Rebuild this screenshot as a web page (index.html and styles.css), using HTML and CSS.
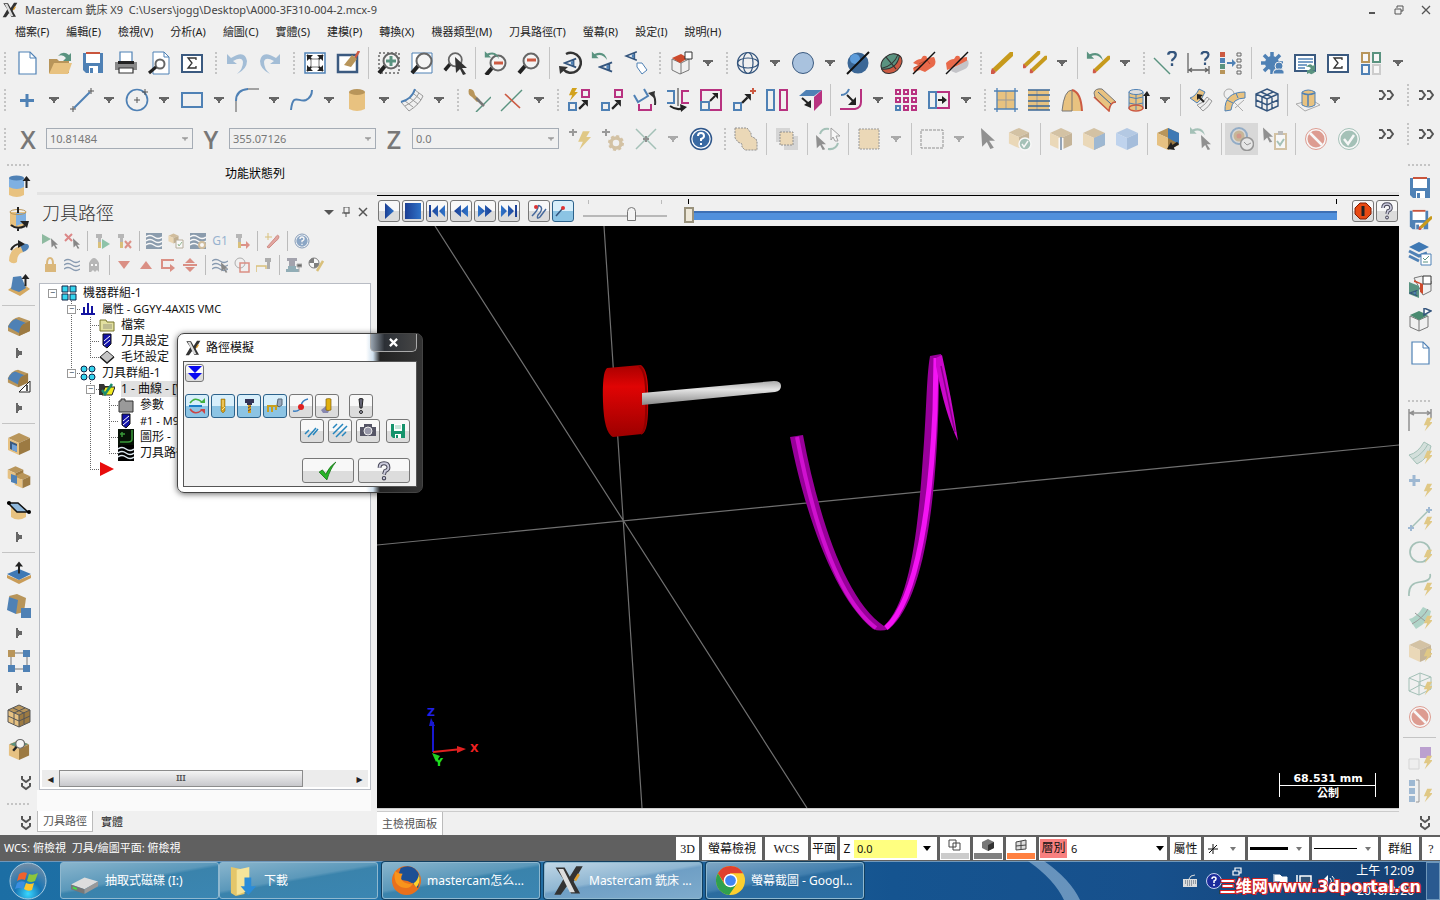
FILE: index.html
```html
<!DOCTYPE html>
<html lang="zh-Hant">
<head>
<meta charset="utf-8">
<title>Mastercam 銑床 X9</title>
<link rel="stylesheet" href="styles.css">
</head>
<body>
<svg class="defs" width="0" height="0" aria-hidden="true">
<defs>
<linearGradient id="gr" x1="0" x2="0" y1="0" y2="1"><stop offset="0" stop-color="#a80000"/><stop offset=".3" stop-color="#e00404"/><stop offset="1" stop-color="#9c0000"/></linearGradient>
<linearGradient id="gg" x1="0" x2="0" y1="0" y2="1"><stop offset="0" stop-color="#aaa"/><stop offset=".35" stop-color="#e4e4e4"/><stop offset="1" stop-color="#888"/></linearGradient>
<radialGradient id="orb" cx=".5" cy=".85" r=".8"><stop offset="0" stop-color="#39d8ff"/><stop offset=".45" stop-color="#1674b4"/><stop offset="1" stop-color="#6d8ba6"/></radialGradient>
<linearGradient id="gplay" x1="0" x2="1"><stop offset="0" stop-color="#1c3f94"/><stop offset="1" stop-color="#2f73c8"/></linearGradient>
<symbol id="dd" viewBox="0 0 10 6"><path d="M0 0h10v2H8v1H7v1H6v2H4V4H3V3H2V2H0z" fill="#666"/></symbol>
<symbol id="dr" viewBox="0 0 6 10"><path d="M0 0v10h2V8h1V7h3V3H3V2H2V0z" fill="#666"/></symbol>
<symbol id="chev" viewBox="0 0 16 10"><path d="M1 1h3l3 4-3 4H1M9 1h3l3 4-3 4H9" fill="none" stroke="#555" stroke-width="2"/></symbol>
<symbol id="chevd" viewBox="0 0 10 16"><path d="M1 1v3l4 3 4-3V1M1 8v3l4 3 4-3V8" fill="none" stroke="#555" stroke-width="2"/></symbol>
<symbol id="bolt" viewBox="0 0 12 16"><path d="M5 0h6L8 5h4L2 16l3-7H1z" fill="#d2a21c"/></symbol>
<symbol id="cur" viewBox="0 0 12 18"><path d="M0 0l12 11H7l4 6-3 1-3-6-4 4z" fill="#333"/></symbol>
<symbol id="cube" viewBox="0 0 24 24"><path d="M12 1l11 5-11 5L1 6z" fill="#b8955a"/><path d="M1 6l11 5v12L1 18z" fill="#e6c182"/><path d="M23 6l-11 5v12l11-5z" fill="#9c7a42"/></symbol>
<symbol id="lens" viewBox="0 0 24 24"><path d="M2 22l6-7" stroke="#222" stroke-width="4"/><circle cx="14" cy="10" r="7.500" fill="#f4f4f4" stroke="#666" stroke-width="2"/></symbol>
<symbol id="swirl" viewBox="0 0 20 12"><path d="M1 0v8h8L6 5q7-3 13 5Q16-2 4 3z" fill="#5a9380"/></symbol>
<symbol id="eye" viewBox="0 0 16 12"><path d="M15 1L2 6l13 5M12 2v8" fill="none" stroke="#34557d" stroke-width="2"/><path d="M9 4v4h3V4z" fill="#4f81b5"/></symbol>
<symbol id="pen" viewBox="0 0 24 24"><path d="M20 1h3v4L6 21l-4-3z" fill="#c79a1c"/><path d="M2 17l4 4-2 2H1v-3z" fill="#d05a48"/></symbol>
<symbol id="new" viewBox="0 0 24 24"><path d="M4 1h11l6 6v16H4z" fill="#fff" stroke="#4f81b5" stroke-width="1.200"/><path d="M15 1v6h6" fill="none" stroke="#4f81b5"/></symbol>
<symbol id="open" viewBox="0 0 24 24"><path d="M1 8h8l2 2h10v12H1z" fill="#b8955a"/><path d="M6 12h18l-4 11H1z" fill="#e8c280"/><path d="M10 5q5-6 11-1l2-2v8h-8l3-3q-3-4-8-2z" fill="#5a9380"/></symbol>
<symbol id="save" viewBox="0 0 24 24"><path d="M2 2h20v20H5l-3-3z" fill="#4f81b5"/><path d="M5 2h14v10H5zM8 15h9v7H8z" fill="#fff"/><path d="M5 1h14v2H5z" fill="#c9553c"/><path d="M9 17h3v5H9z" fill="#4f81b5"/></symbol>
<symbol id="print" viewBox="0 0 24 24"><path d="M6 1h12v10H6z" fill="#fff" stroke="#4f81b5" stroke-width="1.200"/><path d="M1 11h22v8H1z" fill="#888"/><path d="M4 10h16v3H4z" fill="#222"/><path d="M5 17h14v5H5z" fill="#fff" stroke="#333" stroke-width="1.200"/></symbol>
<symbol id="prev" viewBox="0 0 24 24"><path d="M6 1h11l5 5v17H6z" fill="#fff" stroke="#4f81b5"/><path d="M17 1v5h5" fill="none" stroke="#4f81b5"/><circle cx="13" cy="13" r="4.500" fill="none" stroke="#666" stroke-width="2"/><path d="M2 22l7-6" stroke="#222" stroke-width="3"/></symbol>
<symbol id="sigma" viewBox="0 0 24 24"><path d="M2 4h20v17H2z" fill="#fff" stroke="#3b5a80" stroke-width="2"/><path d="M16 9V7H8l4 5-4 5h8v-2" fill="none" stroke="#333" stroke-width="1.300"/></symbol>
<symbol id="undo" viewBox="0 0 24 24"><path d="M2 3v10h10L8 10q9-5 10 1 0 7-6 12 10-5 10-13Q20-2 6 7z" fill="#a3bdd6"/></symbol>
<symbol id="fit" viewBox="0 0 24 24"><path d="M2 2h20v20H2z" fill="#fff" stroke="#4f81b5" stroke-width="1.500"/><path d="M4 4l16 16M20 4L4 20" stroke="#222" stroke-width="2"/><path d="M4 4h6l-6 6zM20 4v6l-6-6zM4 20v-6l6 6zM20 20h-6l6-6z" fill="#222"/><path d="M8 8h8v8H8z" fill="#fff" stroke="#777"/></symbol>
<symbol id="clean" viewBox="0 0 24 24"><path d="M2 4h19v17H2z" fill="#fff" stroke="#3b5a80" stroke-width="2.500"/><path d="M23 0l-4 7" stroke="#cc5a42" stroke-width="2.500"/><path d="M16 4l5 4-6 8-7-2z" fill="#b8955a"/></symbol>
<symbol id="zwin" viewBox="0 0 24 24"><path d="M2 2h20v20H2z" fill="none" stroke="#222" stroke-dasharray="2 2"/><use href="#lens"/><path d="M14 5v10M9 10h10" stroke="#5a9380" stroke-width="3"/></symbol>
<symbol id="ztgt" viewBox="0 0 24 24"><path d="M2 2h20v20H2z" fill="#fff" stroke="#4f81b5"/><use href="#lens"/></symbol>
<symbol id="zcur" viewBox="0 0 24 24"><use href="#lens" width="21" height="21"/><use href="#cur" x="12" y="6" width="12" height="18"/></symbol>
<symbol id="zback" viewBox="0 0 24 24"><use href="#lens" y="2"/><path d="M10 12h9" stroke="#cc5a42" stroke-width="3"/><use href="#swirl" width="16" height="10"/></symbol>
<symbol id="zout" viewBox="0 0 24 24"><use href="#lens"/><path d="M10 9h9" stroke="#cc5a42" stroke-width="3"/></symbol>
<symbol id="rot" viewBox="0 0 24 24"><path d="M8 3a10 10 0 1 1-3 15" fill="none" stroke="#333" stroke-width="2.500"/><path d="M1 15l9 1-8 7z" fill="#333"/><use href="#eye" x="5" y="6" width="14" height="12"/></symbol>
<symbol id="eyeb" viewBox="0 0 24 24"><use href="#swirl" width="17" height="11"/><use href="#eye" x="7" y="10" width="15" height="12"/></symbol>
<symbol id="eyet" viewBox="0 0 24 24"><use href="#eye" width="14" height="10"/><path d="M13 12h5l5 7-5 4-5-7z" fill="#fff" stroke="#4f81b5"/></symbol>
<symbol id="gview" viewBox="0 0 24 24"><path d="M3 8l9 4 8-4v11l-9 4-8-4zM12 12v11" fill="none" stroke="#777"/><path d="M3 7l9-4 7 4-8 5z" fill="#cc4a2c"/><path d="M16 1h7v7h-7z" fill="#fff" stroke="#333"/></symbol>
<symbol id="globe" viewBox="0 0 24 24"><g fill="none" stroke="#34557d" stroke-width="1.200"><circle cx="12" cy="12" r="10.500"/><ellipse cx="12" cy="12" rx="5" ry="10.500"/><ellipse cx="12" cy="12" rx="10.500" ry="5"/></g></symbol>
<symbol id="ball" viewBox="0 0 24 24"><circle cx="12" cy="12" r="10.500" fill="#a9c2de" stroke="#3b5a80"/></symbol>
<symbol id="ballx" viewBox="0 0 24 24"><circle cx="12" cy="12" r="10.500" fill="#3b6796"/><circle cx="9" cy="8" r="5" fill="#5d9cda"/><path d="M1 23L23 1" stroke="#111" stroke-width="2"/></symbol>
<symbol id="gball" viewBox="0 0 24 24"><g transform="rotate(-40 12 12)"><ellipse cx="12" cy="13" rx="11.500" ry="8.500" fill="#cc5a42" stroke="#333"/><path d="M1 11q11 10 22 1-2-8-11-8T1 11z" fill="#5a9380" stroke="#333"/><path d="M12 4v16M1 10q11 6 22 0" fill="none" stroke="#333"/></g></symbol>
<symbol id="redx" viewBox="0 0 24 24"><path d="M1 12q4-4 8-4l2-3q4-1 4 2l7-1q3 5 0 9l-9 6-5-2-6 2-1-4 5-3z" fill="#e8694a"/><path d="M7 13l8-4 3 4M2 17l7-3" fill="none" stroke="#b94a30"/><path d="M1 23L23 1" stroke="#111" stroke-width="1.500"/></symbol>
<symbol id="redy" viewBox="0 0 24 24"><path d="M1 12q4-4 8-4l2-3q4-1 4 2l7-1v5L2 19z" fill="#e8694a"/><path d="M8 17L23 9q2 6-3 9l-9 4-5-2z" fill="#c4c4c8"/><path d="M1 23L23 1" stroke="#111" stroke-width="1.500"/></symbol>
<symbol id="pen2" viewBox="0 0 24 24"><use href="#pen" x="-1" y="-1" width="19" height="19"/><use href="#pen" x="6" y="4" width="19" height="19"/></symbol>
<symbol id="penb" viewBox="0 0 24 24"><use href="#pen" x="6" y="4" width="19" height="19"/><use href="#swirl" width="18" height="12"/></symbol>
<symbol id="qq" viewBox="0 0 10 16"><path d="M1 4q0-3 4-3t4 3q0 2-2 4-2 1-2 3M5 13v3" fill="none" stroke="#34557d" stroke-width="2.500"/></symbol>
<symbol id="lineq" viewBox="0 0 24 24"><path d="M1 7l16 16" stroke="#5a9380" stroke-width="1.500"/><use href="#qq" x="14" width="10" height="15"/></symbol>
<symbol id="dimq" viewBox="0 0 24 24"><path d="M2 2v20M23 15v8M3 19h19M6 17l-3 2 3 2M19 17l3 2-3 2" fill="none" stroke="#666" stroke-width="1.300"/><use href="#qq" x="14" width="10" height="14"/></symbol>
<symbol id="attr" viewBox="0 0 24 24"><path d="M1 1h5v5H1z" fill="#cc5a42"/><path d="M1 7h5v5H1zM8 11h5V8l4 4-4 4v-3H8z" fill="#4f81b5"/><path d="M1 13h5v5H1z" fill="#5a9380"/><path d="M1 19h5v4H1z" fill="#b8955a"/><path d="M18 2h4v3h-4zM18 8h4v3h-4zM18 14h4v3h-4zM18 20h4v3h-4z" fill="none" stroke="#666"/></symbol>
<symbol id="gear" viewBox="0 0 24 24"><path d="M12 1v22M1 12h22M4 4l16 16M20 4L4 20" stroke="#4f81b5" stroke-width="3.500"/><circle cx="12" cy="12" r="7" fill="#4f81b5"/><circle cx="19" cy="15" r="4" fill="#4f81b5" stroke="#f0f0f0"/><path d="M13 23q0-5 6-5t5 5z" fill="#4f81b5" stroke="#f0f0f0"/></symbol>
<symbol id="listr" viewBox="0 0 24 24"><path d="M2 4h20v16H2z" fill="#fff" stroke="#3b5a80" stroke-width="2"/><path d="M5 8h15M5 11h15M5 14h9M5 17h7" stroke="#4f81b5" stroke-width="1.300"/><path d="M13 16q4-5 7-1l2-2v6h-6l2-2q-3-2-5-1zM23 20q-4 5-7 2l-2 1v-4h5z" fill="#5a9380"/></symbol>
<symbol id="four" viewBox="0 0 24 24"><g fill="#f7f7f7" stroke-width="2"><path d="M3 2h7v9H3z" stroke="#b8955a"/><path d="M14 2h7v9h-7z" stroke="#5a9380"/><path d="M3 14h7v9H3z" stroke="#4f81b5"/><path d="M14 14h7v9h-7z" stroke="#ccc"/></g></symbol>
<symbol id="plus" viewBox="0 0 24 24"><path d="M12 6v13M5 12.500h14" stroke="#4f81b5" stroke-width="3"/></symbol>
<symbol id="line" viewBox="0 0 24 24"><path d="M4 20L20 4" stroke="#4f81b5" stroke-width="2"/><path d="M21 0v6M18 3h6M3 18v6M0 21h6" stroke="#555"/></symbol>
<symbol id="circ" viewBox="0 0 24 24"><circle cx="12" cy="12" r="10.500" fill="none" stroke="#4f81b5" stroke-width="1.700"/><path d="M12 9v6M9 12h6M20 1v6M17 4h6" stroke="#555"/></symbol>
<symbol id="rect" viewBox="0 0 24 24"><path d="M2 5h20v14H2z" fill="none" stroke="#4f81b5" stroke-width="2"/></symbol>
<symbol id="arc" viewBox="0 0 24 24"><path d="M1 24V13M12 1h12" stroke="#555"/><path d="M1 13Q1 2 13 1" fill="none" stroke="#4f81b5" stroke-width="2"/></symbol>
<symbol id="spl" viewBox="0 0 24 24"><path d="M1 22C3 4 9 15 16 12Q22 9 22 2" fill="none" stroke="#4f81b5" stroke-width="2"/></symbol>
<symbol id="cyl" viewBox="0 0 24 24"><path d="M4 4v17q8 4 16 0V4z" fill="#e8c280"/><ellipse cx="12" cy="4" rx="8" ry="3" fill="#b8955a"/></symbol>
<symbol id="surf" viewBox="0 0 24 24"><path d="M1 14Q12 11 15 2l8 6q-3 8-14 15zM5 18Q15 13 19 5M5 13l8 6M10 10l8 6M14 6l7 6" fill="none" stroke="#999"/><path d="M1 14Q12 11 15 1" fill="none" stroke="#4f81b5" stroke-width="2"/></symbol>
<symbol id="trim" viewBox="0 0 24 24"><path d="M2 1q5-1 6 6l5 5-3 2-5-5Q0 6 2 1z" fill="#b8955a"/><path d="M24 9L9 24" stroke="#5a9380" stroke-width="1.500"/><path d="M9 10l8 8" stroke="#777" stroke-width="2.500"/></symbol>
<symbol id="brk" viewBox="0 0 24 24"><path d="M22 2L1 23" stroke="#5a9380" stroke-width="1.500"/><path d="M5 6l15 14" stroke="#cc5a42" stroke-width="1.700"/></symbol>
<symbol id="ar" viewBox="0 0 10 10"><path d="M1 9l5-5" stroke="#222" stroke-width="2"/><path d="M3 1h6v6z" fill="#222"/></symbol>
<symbol id="mv1" viewBox="0 0 24 24"><use href="#bolt" x="1" width="10" height="13"/><path d="M2 15h7v7H2z" fill="none" stroke="#4f81b5" stroke-width="2"/><path d="M15 2h7v7h-7z" fill="none" stroke="#b83280" stroke-width="2"/><use href="#ar" x="11" y="11" width="11" height="11"/></symbol>
<symbol id="mv2" viewBox="0 0 24 24"><path d="M2 15h7v7H2z" fill="none" stroke="#4f81b5" stroke-width="2"/><path d="M15 2h7v7h-7z" fill="none" stroke="#b83280" stroke-width="2"/><use href="#ar" x="11" y="11" width="11" height="11"/></symbol>
<symbol id="rott" viewBox="0 0 24 24"><path d="M1 7l4 7 10-6-4-7" fill="none" stroke="#4f81b5" stroke-width="2"/><path d="M6 16v6h12v-6" fill="none" stroke="#b83280" stroke-width="2"/><path d="M22 17q1-8-3-12" fill="none" stroke="#333" stroke-width="2"/><path d="M15 5l7-2-1 7z" fill="#333"/></symbol>
<symbol id="mir" viewBox="0 0 24 24"><path d="M1 3h7v12H1" fill="none" stroke="#4f81b5" stroke-width="2"/><path d="M23 3h-7v12h7" fill="none" stroke="#b83280" stroke-width="2"/><path d="M12 0v18" stroke="#333"/><path d="M4 18q7 5 13 2" fill="none" stroke="#222" stroke-width="2"/><path d="M14 16l7 3-6 5z" fill="#222"/></symbol>
<symbol id="scl" viewBox="0 0 24 24"><path d="M2 2h20v20H2z" fill="none" stroke="#b83280" stroke-width="2"/><path d="M2 14h8v8H2z" fill="#f0f0f0" stroke="#4f81b5" stroke-width="2"/><use href="#ar" x="10" y="4" width="10" height="10"/></symbol>
<symbol id="mvo" viewBox="0 0 24 24"><path d="M2 15h7v7H2z" fill="none" stroke="#4f81b5" stroke-width="2"/><use href="#ar" x="9" y="5" width="11" height="11"/><path d="M21 0v6M18 3h6" stroke="#cc5a42" stroke-width="2"/></symbol>
<symbol id="off" viewBox="0 0 24 24"><path d="M2 2h7v20H2z" fill="none" stroke="#4f81b5" stroke-width="2"/><path d="M15 2h7v20h-7z" fill="none" stroke="#b83280" stroke-width="2"/></symbol>
<symbol id="proj" viewBox="0 0 24 24"><path d="M1 8l7-6h16l-8 6z" fill="#4f81b5"/><path d="M24 2v13l-8 8V9z" fill="#b83280"/><path d="M4 10l7 6" stroke="#222" stroke-width="2"/><path d="M13 12v8l-7-3z" fill="#222"/></symbol>
<symbol id="corn" viewBox="0 0 24 24"><path d="M2 7q6 0 8-6" fill="none" stroke="#4f81b5" stroke-width="2"/><path d="M1 21h15q6-1 6-7V1" fill="none" stroke="#b83280" stroke-width="2"/><path d="M8 7l7 7" stroke="#222" stroke-width="2"/><path d="M17 9v8H9z" fill="#222"/></symbol>
<symbol id="grid9" viewBox="0 0 24 24"><path d="M2 2h4v4H2zM10 2h4v4h-4zM18 2h4v4h-4zM2 10h4v4H2zM10 10h4v4h-4zM18 10h4v4h-4zM10 18h4v4h-4zM18 18h4v4h-4z" fill="none" stroke="#b83280" stroke-width="2"/><path d="M2 18h4v4H2z" fill="none" stroke="#4f81b5" stroke-width="2"/></symbol>
<symbol id="stre" viewBox="0 0 24 24"><path d="M9 4h13v16H9" fill="none" stroke="#b83280" stroke-width="2"/><path d="M2 4h7v16H2z" fill="none" stroke="#4f81b5" stroke-width="2"/><path d="M11 11h4V8l5 4-5 4v-3h-4z" fill="#222"/></symbol>
<symbol id="s1" viewBox="0 0 24 24"><path d="M3 3h18v18H3z" fill="#e8c280"/><path d="M12 3v18M3 12h18" stroke="#999"/><path d="M3 0v24M21 0v24M0 3h24M0 21h24" stroke="#4f81b5" stroke-width="1.300"/></symbol>
<symbol id="s2" viewBox="0 0 24 24"><path d="M1 2h21v20H1z" fill="#e8c280"/><path d="M10 2v20" stroke="#999"/><path d="M1 2h22M1 7h22M1 13h22M1 18h22M1 22h22" stroke="#3b6796" stroke-width="1.500"/></symbol>
<symbol id="s3" viewBox="0 0 24 24"><path d="M2 23Q4 2 12 2t10 21z" fill="#e8c280"/><path d="M2 23Q4 2 12 2v21z" fill="none" stroke="#777"/><path d="M12 2q9 2 10 21" fill="none" stroke="#cc5a42" stroke-width="2"/></symbol>
<symbol id="s4" viewBox="0 0 24 24"><path d="M1 5q1-5 8-4l14 13q-6 0-7 9L2 9z" fill="#e8c280" stroke="#777"/><path d="M5 4l13 12" stroke="#3b6796"/><path d="M23 14q-6 0-7 9L1 9" fill="none" stroke="#cc5a42" stroke-width="1.500"/></symbol>
<symbol id="s5" viewBox="0 0 24 24"><path d="M3 4v17q7 3 14 0V4z" fill="#e8c280"/><path d="M3 4v17M17 4v17M10 3v19M3 9q7 3 14 0M3 15q7 3 14 0" stroke="#4f81b5" fill="none"/><ellipse cx="10" cy="4" rx="7" ry="2.500" fill="#ddd" stroke="#4f81b5"/><ellipse cx="10" cy="20" rx="7" ry="3" fill="none" stroke="#cc5a42" stroke-width="1.500"/><path d="M19 21V8h-2l4-5 3 5h-3v13z" fill="#222"/></symbol>
<symbol id="s6" viewBox="0 0 24 24"><path d="M1 10q6-2 9-9l6 3q-3 8-8 11z" fill="#e8c280" stroke="#4f81b5"/><path d="M8 17q7-2 10-8l5 4q-3 6-9 10zM11 20q6-4 9-9" fill="#eee" stroke="#999"/><path d="M9 8l6 6" stroke="#222" stroke-width="2"/><path d="M8 6l6 1-6 5z" fill="#222"/></symbol>
<symbol id="s7" viewBox="0 0 24 24"><circle cx="7" cy="6" r="5" fill="none" stroke="#aaa"/><path d="M3 23Q2 4 23 4v6Q10 10 9 22z" fill="#e8c280" stroke="#4f81b5"/><path d="M14 5l2 5M5 12l6 3" stroke="#4f81b5"/><path d="M12 14l9 9M22 12l-9 8" stroke="#aaa"/></symbol>
<symbol id="wc" viewBox="0 0 24 24"><path d="M12 1l11 5v12l-11 5-11-5V6zM1 6l11 5 11-5M12 11v12M1 12l11 5 11-5M6 4l11 5v11M18 4L7 9v11" fill="none" stroke="#34557d" stroke-width="1.400"/></symbol>
<symbol id="s8" viewBox="0 0 24 24"><path d="M0 16l16-4 8 5-15 6z" fill="none" stroke="#aaa"/><path d="M6 4q6-4 13 0v13q-6 4-13 0z" fill="#e8c280" stroke="#4f81b5"/><path d="M6 5q6 3 13 0M12 6v12" fill="none" stroke="#4f81b5" stroke-width="1.500"/></symbol>
<symbol id="ab" viewBox="0 0 24 24"><path d="M5 2v7M1 5h8" stroke="#444" stroke-width="2"/><use href="#bolt" x="9" y="4" width="14" height="19"/></symbol>
<symbol id="ag" viewBox="0 0 24 24"><path d="M5 2v7M1 5h8" stroke="#444" stroke-width="2"/><circle cx="15" cy="16" r="5" fill="none" stroke="#b8955a" stroke-width="3.500"/><circle cx="15" cy="16" r="7" fill="none" stroke="#b8955a" stroke-width="2" stroke-dasharray="3 2.500"/></symbol>
<symbol id="xx" viewBox="0 0 24 24"><path d="M2 2l20 20M22 2L2 22" stroke="#5a9380" stroke-width="1.500"/><path d="M12 9v6M9 12h6" stroke="#333" stroke-width="2"/></symbol>
<symbol id="help" viewBox="0 0 24 24"><circle cx="12" cy="12" r="10.500" fill="#fff" stroke="#2e568a" stroke-width="1.500"/><circle cx="12" cy="12" r="8.500" fill="#3a6aa3"/><path d="M9 9q0-3 3-3t3 3q0 2-3 3v2M12 16v2" fill="none" stroke="#fff" stroke-width="2"/></symbol>
<symbol id="oct" viewBox="0 0 24 24"><path d="M1 1h12l4 5v3l5 3 1 3v8H11l-3-3v-3l-4-2-3-4z" fill="#e8c280" stroke="#333" stroke-dasharray="2 1"/></symbol>
<symbol id="lay" viewBox="0 0 24 24"><path d="M1 1h14v14H1zM9 9h14v14H9z" fill="#bbb"/><path d="M5 5h13v13H5z" fill="#e8c280" stroke="#333" stroke-dasharray="2 1"/></symbol>
<symbol id="cyc" viewBox="0 0 24 24"><use href="#cur" y="8" width="10" height="15"/><path d="M15 1l9 8h-4l2 5h-3l-2-4-2 3z" fill="#fff" stroke="#555"/><path d="M4 7q2-6 9-5M22 16q-2 7-10 6" fill="none" stroke="#5a9380" stroke-width="2"/></symbol>
<symbol id="tsq" viewBox="0 0 24 24"><path d="M2 2h20v20H2z" fill="#e8c280" stroke="#444" stroke-dasharray="2 1"/></symbol>
<symbol id="dsq" viewBox="0 0 24 24"><path d="M1 3h22v18H1z" fill="none" stroke="#333" stroke-dasharray="3 1"/></symbol>
<symbol id="curs" viewBox="0 0 24 24"><use href="#cur" x="6" y="1" width="14" height="21"/></symbol>
<symbol id="cubec" viewBox="0 0 24 24"><use href="#cube" width="22" height="22"/><circle cx="17" cy="17" r="6" fill="#5a9380" stroke="#fff" stroke-width="1.500"/><path d="M14 17l2 3 4-6" fill="none" stroke="#fff" stroke-width="1.500"/></symbol>
<symbol id="cube1" viewBox="0 0 24 24"><use href="#cube"/><path d="M12 11v12" stroke="#fff" stroke-width="5"/><path d="M12 10v13" stroke="#3b5a80" stroke-width="2"/></symbol>
<symbol id="cube2" viewBox="0 0 24 24"><use href="#cube"/><path d="M23 6l-11 5v12l11-5z" fill="#4f81b5"/></symbol>
<symbol id="cube3" viewBox="0 0 24 24"><path d="M12 1l11 5-11 5L1 6z" fill="#7aa3d8"/><path d="M1 6l11 5v12L1 18z" fill="#8fb8ec"/><path d="M23 6l-11 5v12l11-5z" fill="#5c8cc8"/></symbol>
<symbol id="cube4" viewBox="0 0 24 24"><use href="#cube"/><path d="M12 1l11 5v11l-11-6z" fill="#3f79b4"/><path d="M22 16l-6 4" stroke="#222" stroke-width="3"/><path d="M11 22l4-7 4 8z" fill="#222"/></symbol>
<symbol id="bcur" viewBox="0 0 24 24"><use href="#swirl" width="17" height="10"/><use href="#cur" x="12" y="8" width="10" height="15"/></symbol>
<symbol id="tgt" viewBox="0 0 24 24"><circle cx="9" cy="9" r="8" fill="none" stroke="#4f81b5" stroke-width="2"/><circle cx="9" cy="9" r="4" fill="#cc5a42" stroke="#b8955a" stroke-width="3"/><circle cx="17" cy="17" r="6.500" fill="#f4f4f4" stroke="#555" stroke-width="1.500"/><path d="M14 15l3 3 4-2" stroke="#555" fill="none"/></symbol>
<symbol id="clip" viewBox="0 0 24 24"><use href="#cur" width="10" height="16"/><path d="M12 7h11v15H12z" fill="#fff" stroke="#b8955a" stroke-width="2"/><path d="M15 4h5v4h-5z" fill="#888"/><path d="M14 14l3 4 4-6" fill="none" stroke="#5a9380" stroke-width="2"/></symbol>
<symbol id="no" viewBox="0 0 24 24"><circle cx="12" cy="12" r="10.500" fill="#fff" stroke="#cc4a34"/><circle cx="12" cy="12" r="8.500" fill="#cc4a34"/><path d="M6 6l12 12" stroke="#fff" stroke-width="2.500"/></symbol>
<symbol id="yes" viewBox="0 0 24 24"><circle cx="12" cy="12" r="10.500" fill="#fff" stroke="#5a9380"/><circle cx="12" cy="12" r="8.500" fill="#5a9380"/><path d="M7 12l4 5 6-9" fill="none" stroke="#fff" stroke-width="2.500"/></symbol>
<symbol id="up" viewBox="0 0 8 12"><path d="M3 12V5H0l4-5 4 5H5v7z" fill="#222"/></symbol>
<symbol id="l1" viewBox="0 0 24 24"><path d="M2 13v8q8 4 15 0v-8z" fill="#e8c280"/><path d="M2 4v9q8 4 15 0V4z" fill="#7fb0e2"/><ellipse cx="9.500" cy="4" rx="7.500" ry="2.500" fill="#4f81b5"/><use href="#up" x="15" y="2" width="9" height="12"/></symbol>
<symbol id="l2" viewBox="0 0 24 24"><path d="M3 5v14q7 4 16 0V5z" fill="#e8c280"/><path d="M9 6h10v9l-10 4z" fill="#7fb0e2"/><ellipse cx="11" cy="5" rx="8" ry="2.500" fill="none" stroke="#b8955a"/><path d="M11 0v6M11 20v4M4 18q6 5 14 1" fill="none" stroke="#222" stroke-width="2"/><path d="M13 14h9l-2 7z" fill="#222"/></symbol>
<symbol id="l3" viewBox="0 0 24 24"><path d="M2 21Q2 9 13 6l4 6q-7 1-7 10-4 3-8-1z" fill="#e8c280"/><path d="M13 5q8-3 9 1 0 4-6 6z" fill="#4f81b5"/><path d="M4 10q3-6 9-6" fill="none" stroke="#222" stroke-width="2"/><path d="M11 0l7 4-7 4z" fill="#222"/></symbol>
<symbol id="l4" viewBox="0 0 24 24"><path d="M1 17l5-4h13l4 3-10 7z" fill="#d4a860"/><path d="M6 4l8-1 5 12-7 4-8-3z" fill="#4f81b5"/><use href="#up" x="14" y="1" width="9" height="12"/></symbol>
<symbol id="l5" viewBox="0 0 24 24"><path d="M12 3l11 4v10l-11 5-11-5v-5q4-8 11-9z" fill="#b8955a"/><path d="M12 12l11-5v10l-11 5z" fill="#9c7a42"/><path d="M1 13Q4 6 9 5l10 4q-6 1-7 10z" fill="#4f81b5"/></symbol>
<symbol id="l6" viewBox="0 0 24 24"><use href="#l5" y="-2" width="22" height="22"/><path d="M12 23L23 12v11z" fill="#fff" stroke="#222"/><path d="M20 16v6" stroke="#222" stroke-width="1.500"/></symbol>
<symbol id="l7" viewBox="0 0 24 24"><use href="#cube"/><path d="M3 9l7 3v8l-7-3z" fill="#3b5a80"/><path d="M5 12l5 2v6l-5-2z" fill="#6fa0d8"/></symbol>
<symbol id="l8" viewBox="0 0 24 24"><use href="#cube" width="17" height="18"/><use href="#cube" x="7" y="7" width="17" height="17"/><path d="M4 9l6 2v8l-6-2z" fill="#4f81b5"/></symbol>
<symbol id="l9" viewBox="0 0 24 24"><path d="M4 7v12q7 5 15 0v-8z" fill="#e8c280"/><path d="M1 5h10l10 9H10z" fill="#8fb8dc" stroke="#111" stroke-width="1.500"/><circle cx="2" cy="5" r="2"/><circle cx="22" cy="14" r="2"/></symbol>
<symbol id="l10" viewBox="0 0 24 24"><path d="M0 14l12 5 12-5v3l-12 6-12-6z" fill="#c99c58"/><path d="M12 8l12 5-12 6L0 13z" fill="#3f79b4"/><use href="#up" x="8" width="8" height="13"/></symbol>
<symbol id="l11" viewBox="0 0 24 24"><path d="M2 2l8-2 9 4-2 14-8 2z" fill="#b8955a"/><path d="M2 3l9 3-2 14-9-4z" fill="#4f81b5"/><path d="M14 14h10v10H14z" fill="#4f81b5"/></symbol>
<symbol id="l12" viewBox="0 0 24 24"><path d="M4 4h16v16H4z" fill="none" stroke="#777"/><path d="M1 1h7v7H1z" fill="#b8955a"/><path d="M16 1h7v7h-7zM1 16h7v7H1zM16 16h7v7h-7z" fill="#4f81b5"/></symbol>
<symbol id="l13" viewBox="0 0 24 24"><use href="#cube"/><path d="M12 1l11 5v12l-11 5-11-5V6zM1 6l11 5 11-5M12 11v12M1 12l11 5 11-5M6 4l11 5v11M18 4L7 9v11" fill="none" stroke="#555"/></symbol>
<symbol id="l14" viewBox="0 0 24 24"><use href="#cube" y="2" width="24" height="22"/><path d="M12 4l9 3-9 4-9-4z" fill="#5a9380"/><use href="#lens" x="4" y="1" width="16" height="14"/></symbol>
<symbol id="r2" viewBox="0 0 24 24"><use href="#save" width="22" height="22"/><use href="#pen" x="10" y="5" width="15" height="18"/></symbol>
<symbol id="r3" viewBox="0 0 24 24"><path d="M11 0l10 5-10 5L1 5z" fill="#3f79b4"/><path d="M1 9l10 5 8-3M1 14l10 5" fill="none" stroke="#4f81b5" stroke-width="3"/><path d="M13 12h10v11H13z" fill="#fff" stroke="#4f81b5"/><path d="M15 16l2 2 4-4M15 20h5" fill="none" stroke="#5a9380"/></symbol>
<symbol id="r4" viewBox="0 0 24 24"><path d="M6 3l8-2 9 5v10l-8 4z" fill="none" stroke="#777"/><path d="M6 5l9 4v10l-3-2V9L6 7z" fill="#cc4a2c"/><path d="M1 7l10 4v12L1 19z" fill="#5a9380"/><path d="M15 1h8v8h-8z" fill="#fff" stroke="#333"/><use href="#eye" x="1" y="14" width="9" height="8"/></symbol>
<symbol id="r5" viewBox="0 0 24 24"><path d="M2 8l9 4 9-4v11l-9 4-9-4zM11 12v11" fill="none" stroke="#777"/><path d="M11 3l9 4-9 5-9-5z" fill="#4a8a70"/><path d="M16 0l7 3-7 4z" fill="#fff" stroke="#34557d" stroke-width="1.500"/></symbol>
<symbol id="rb1" viewBox="0 0 24 24"><path d="M1 1v22M23 1v9M3 5h18M6 3L2 5l4 2M19 3l3 2-3 2" fill="none" stroke="#333" stroke-width="1.500"/></symbol>
<symbol id="rb2" viewBox="0 0 24 24"><path d="M1 14Q10 12 16 1l7 4q-2 12-14 18z" fill="#b8cfc8" stroke="#5a9380"/><path d="M5 18Q15 13 20 3" stroke="#5a9380" fill="none"/></symbol>
<symbol id="wire" viewBox="0 0 24 24"><path d="M1 6l11-5 11 4v12l-12 6-10-4zM1 6l10 4 12-5M11 10v13M12 1v12l-11 6M12 13l11 4" fill="none" stroke="#5a9380"/></symbol>
<symbol id="logo" viewBox="0 0 24 24"><path d="M2 2h7l4 7 5-8h5l-7 12 5 9h-7l-3-6-5 7H1l7-12z" fill="#333"/><path d="M4 3h4l9 18h-4z" fill="#ddd"/><path d="M17 12l3-5" stroke="#e0a030" stroke-width="2"/></symbol>
<symbol id="wav" viewBox="0 0 16 16"><path d="M0 0h16v16H0z" fill="#3a5878"/><path d="M0 4q4-3 8 0t8 0M0 8q4-3 8 0t8 0M0 12q4-3 8 0t8 0" fill="none" stroke="#fff" stroke-width="1.500"/></symbol>
<symbol id="wavl" viewBox="0 0 16 16"><path d="M0 4q4-3 8 0t8 0M0 8q4-3 8 0t8 0M0 12q4-3 8 0t8 0" fill="none" stroke="#34557d" stroke-width="1.300"/></symbol>
<symbol id="tl" viewBox="0 0 16 16"><path d="M2 1h6v4H7v9H4V5H2z" fill="#888"/><path d="M4 9h3v6H4z" fill="#c79a1c"/></symbol>
<symbol id="p1" viewBox="0 0 16 16"><path d="M0 1l9 5-9 5z" fill="#3f8f60"/><use href="#cur" x="9" y="5" width="7" height="11"/></symbol>
<symbol id="p2" viewBox="0 0 16 16"><path d="M1 1l7 7M8 1L1 8" stroke="#c33" stroke-width="2"/><use href="#cur" x="9" y="5" width="7" height="11"/></symbol>
<symbol id="p3" viewBox="0 0 16 16"><use href="#tl"/><path d="M8 6l8 5-8 5z" fill="#3f9f70"/></symbol>
<symbol id="p4" viewBox="0 0 16 16"><use href="#tl"/><path d="M9 8l6 7M15 8l-6 7" stroke="#c43" stroke-width="2"/></symbol>
<symbol id="p6" viewBox="0 0 16 16"><use href="#cube" width="11" height="11"/><path d="M8 7h7v8H8z" fill="#fff" stroke="#875"/><path d="M10 11l1 2 3-4" fill="none" stroke="#484"/></symbol>
<symbol id="p7" viewBox="0 0 16 16"><use href="#wav"/><circle cx="12" cy="12" r="3" fill="#fff" stroke="#b8955a" stroke-width="2"/></symbol>
<symbol id="p9" viewBox="0 0 16 16"><use href="#tl"/><path d="M7 11h5V8l4 4-4 4v-3H7z" fill="#c43"/></symbol>
<symbol id="p10" viewBox="0 0 16 16"><path d="M3 14L11 5q3-5 4-1-1 3-3 4L5 15z" fill="#d86a60" stroke="#b43c30"/><path d="M4 0v7M1 4h7" stroke="#c79a1c"/></symbol>
<symbol id="q1" viewBox="0 0 16 16"><path d="M3 7h11v8H3z" fill="#c98a1c"/><path d="M5 7q0-6 3-6t3 6" fill="none" stroke="#c98a1c" stroke-width="2"/></symbol>
<symbol id="q3" viewBox="0 0 16 16"><path d="M3 15V6q5-10 10 0v9l-2-2-2 2-2-2-2 2z" fill="#888"/><path d="M5 7h2v2H5zM9 7h2v2H9z" fill="#fff"/></symbol>
<symbol id="q4" viewBox="0 0 16 16"><path d="M2 4h12l-6 8z" fill="#c9402c"/></symbol>
<symbol id="q5" viewBox="0 0 16 16"><path d="M2 12h12L8 4z" fill="#c9402c"/></symbol>
<symbol id="q6" viewBox="0 0 16 16"><path d="M14 3H2v8h8" fill="none" stroke="#c9402c" stroke-width="2"/><path d="M10 7l5 4-5 4z" fill="#c9402c"/></symbol>
<symbol id="q7" viewBox="0 0 16 16"><path d="M3 6h10L8 1zM3 10h10l-5 5zM1 7h14v2H1z" fill="#c9402c"/></symbol>
<symbol id="q8" viewBox="0 0 16 16"><use href="#wavl"/><use href="#cur" x="9" y="5" width="7" height="11"/></symbol>
<symbol id="q9" viewBox="0 0 16 16"><circle cx="6" cy="6" r="5" fill="none" stroke="#777"/><path d="M6 6h9v9H6z" fill="none" stroke="#c9402c" stroke-width="1.500"/></symbol>
<symbol id="q10" viewBox="0 0 16 16"><path d="M0 15V9h10v3" fill="none" stroke="#c79a1c" stroke-width="1.500"/><path d="M9 1h6v4h-1v7h-3V5H9z" fill="#777"/></symbol>
<symbol id="q11" viewBox="0 0 16 16"><path d="M1 1h10v3H1zM3 4h6v5H3z" fill="#667"/><path d="M0 12h13v3H0zM2 9h8v3H2z" fill="#478"/><path d="M11 7h5v3h-5zM13 10v5" stroke="#777"/></symbol>
<symbol id="q12" viewBox="0 0 16 16"><circle cx="6" cy="6" r="5" fill="#fff" stroke="#222"/><path d="M6 1v10a5 5 0 0 0 5-5H1a5 5 0 0 1 5-5z" fill="#222"/><path d="M15 4L9 14" stroke="#c79a1c" stroke-width="2.500"/></symbol>
<symbol id="t1" viewBox="0 0 16 16"><path d="M1 1h6v6H1zM9 1h6v6H9zM1 9h6v6H1zM9 9h6v6H9z" fill="#35d5ef" stroke="#124"/></symbol>
<symbol id="t2" viewBox="0 0 16 16"><path d="M1 13h14M4 13V6M8 13V2M12 13V5" stroke="#1414a0" stroke-width="2"/></symbol>
<symbol id="t3" viewBox="0 0 16 16"><path d="M1 3h6l1 2h7v9H1z" fill="#e2e0a0" stroke="#77752c"/><path d="M4 7h9v5H4z" fill="#bdbb90"/></symbol>
<symbol id="t4" viewBox="0 0 16 16"><path d="M4 1h8v10l-4 4-4-3z" fill="#1212a8" stroke="#111"/><path d="M5 8l6-5M5 12l6-5" stroke="#fff"/></symbol>
<symbol id="t5" viewBox="0 0 16 16"><path d="M8 2l7 6-7 6-7-6z" fill="#c4c4c4" stroke="#333"/><path d="M1 8l7 6 7-6" fill="none" stroke="#222" stroke-width="1.500"/></symbol>
<symbol id="t6" viewBox="0 0 16 16"><g fill="#35d5ef" stroke="#124"><circle cx="4" cy="4" r="3"/><circle cx="12" cy="4" r="3"/><circle cx="4" cy="12" r="3"/><circle cx="12" cy="12" r="3"/></g></symbol>
<symbol id="t7" viewBox="0 0 16 16"><path d="M0 3h5l1 2h7v9H0z" fill="#333"/><path d="M3 14l3-8h10l-3 8z" fill="#f2ea20" stroke="#222"/><path d="M3 9l3 4 7-10" fill="none" stroke="#1c8c6c" stroke-width="2.500"/></symbol>
<symbol id="t8" viewBox="0 0 16 16"><path d="M1 4h2V2h4v2h8v11H1z" fill="#9a9a9a" stroke="#333"/></symbol>
<symbol id="t9" viewBox="0 0 16 16"><path d="M0 0h16v16H0z" fill="#061206"/><path d="M14 1v9q0 3-4 3H2M4 3v5M2 5h5" fill="none" stroke="#3a9a3a" stroke-width="1.500"/></symbol>
<symbol id="t10" viewBox="0 0 16 16"><path d="M0 0h16v16H0z"/><path d="M0 4q4-3 8 0t8 0M0 8q4-3 8 0t8 0M0 12q4-3 8 0t8 0" fill="none" stroke="#dce8f0" stroke-width="1.500"/></symbol>
<symbol id="t11" viewBox="0 0 16 16"><path d="M1 1l14 7-14 7z" fill="#e80c0c"/></symbol>
<symbol id="play" viewBox="0 0 18 18"><path d="M5 1l9 8-9 8z" fill="url(#gplay)"/></symbol>
<symbol id="stop" viewBox="0 0 18 18"><path d="M1 1h16v16H1z" fill="url(#gplay)"/></symbol>
<symbol id="rw" viewBox="0 0 18 18"><path d="M9 3v12L2 9zM16 3v12L9 9z" fill="url(#gplay)"/></symbol>
<symbol id="rw0" viewBox="0 0 18 18"><path d="M1 3h2v12H1zM10 3v12L4 9zM17 3v12l-6-6z" fill="url(#gplay)"/></symbol>
<symbol id="tr" viewBox="0 0 18 18"><path d="M2 14Q8 8 8 5t3 0q2 3-3 8-2 5 2 2l6-8" fill="none" stroke="#46699c" stroke-width="1.500"/><circle cx="6" cy="5" r="2" fill="#d33"/></symbol>
<symbol id="tr2" viewBox="0 0 18 18"><path d="M2 14l7-8" stroke="#34557d" stroke-width="1.500"/><circle cx="9" cy="6" r="2" fill="#d33"/></symbol>
<symbol id="halt" viewBox="0 0 18 18"><path d="M6 1h6l5 5v6l-5 5H6l-5-5V6z" fill="#e84a14" stroke="#801c04"/><path d="M9 4v10" stroke="#222" stroke-width="3"/></symbol>
<symbol id="quest" viewBox="0 0 18 18"><path d="M5 6q0-4 4-4t4 4q0 2-3 3l-1 3" fill="none" stroke="#445" stroke-width="3.500"/><path d="M5 6q0-4 4-4t4 4q0 2-3 3l-1 3" fill="none" stroke="#ccd" stroke-width="1.700"/><circle cx="9" cy="15.500" r="1.500" fill="#ccd" stroke="#445"/></symbol>
<symbol id="d0" viewBox="0 0 18 18"><path d="M2 2h14L9 9zM2 9h14l-7 7z" fill="#0808f0"/></symbol>
<symbol id="d1" viewBox="0 0 18 18"><path d="M1 9h13" stroke="#1a7ec8" stroke-width="2"/><path d="M2 6q5-7 12-1" fill="none" stroke="#40b040" stroke-width="1.500"/><path d="M12 6h5V1z" fill="#40b040"/><path d="M2 12q5 7 12 1" fill="none" stroke="#c44" stroke-width="1.500"/><path d="M12 12h5v5z" fill="#c44"/></symbol>
<symbol id="d2" viewBox="0 0 18 18"><path d="M7 2h4v12l-2 2-2-2z" fill="#d5a020" stroke="#806000" stroke-width=".5"/><path d="M9 3v7M8 13l3-3" stroke="#ffe890"/></symbol>
<symbol id="d3" viewBox="0 0 18 18"><path d="M5 2h9v4h-2v2H7V6H5z" fill="#335"/><path d="M8 8h3v8H8z" fill="#d5a020"/><path d="M8 11l3-2M8 14l3-2" stroke="#643"/></symbol>
<symbol id="d4" viewBox="0 0 18 18"><path d="M2 15V9h10M6 9v6M10 9v4" fill="none" stroke="#c8a020" stroke-width="2"/><path d="M12 2h4v6l-3 2-2-2z" fill="#9aa8bc" stroke="#567"/></symbol>
<symbol id="d5" viewBox="0 0 18 18"><path d="M1 14q7 1 8-5t7-7" fill="none" stroke="#3a7ec0" stroke-width="1.500"/><circle cx="9" cy="10" r="3" fill="#e02020"/></symbol>
<symbol id="d6" viewBox="0 0 18 18"><path d="M3 13l5-4h5l-3 7H5z" fill="#8888b0"/><path d="M8 2q3-1 5 0v11q-3 1-5 0z" fill="#e0b010" stroke="#806010" stroke-width=".7"/></symbol>
<symbol id="d7" viewBox="0 0 18 18"><path d="M7 2q2-1 4 0l-1 9H8z" fill="#667" stroke="#222"/><circle cx="9" cy="15" r="1.500" fill="#aab" stroke="#222"/></symbol>
<symbol id="d8" viewBox="0 0 18 18"><path d="M2 12l4-4M5 15l8-9M10 13l5-6" stroke="#2585bd" stroke-width="1.500"/></symbol>
<symbol id="d9" viewBox="0 0 18 18"><path d="M2 6l4-4M2 12L12 2M5 15L16 4M11 14l4-4" stroke="#2585bd" stroke-width="1.500"/></symbol>
<symbol id="d10" viewBox="0 0 18 18"><path d="M1 5h4V2h8v3h4v9H1z" fill="#556"/><circle cx="9" cy="9" r="4" fill="#99a" stroke="#eee"/></symbol>
<symbol id="d11" viewBox="0 0 18 18"><path d="M2 2h14v14H4l-2-2z" fill="#15936c"/><path d="M5 2h8v7H5zM6 12h6v4H6z" fill="#fff"/><path d="M6 4h6M6 6h6" stroke="#8ccab4"/><path d="M7 13h2v3H7z" fill="#15936c"/></symbol>
<symbol id="okk" viewBox="0 0 18 18"><path d="M1 10l3-2 3 4q3-7 9-11-5 6-8 16z" fill="#28b428" stroke="#137013" stroke-width=".7"/></symbol>
</defs>
</svg>

<div class="app">
<header class="title"><svg class="s16"><use href="#logo"/></svg><h1>Mastercam 銑床 X9&nbsp; C:\Users\jogg\Desktop\A000-3F310-004-2.mcx-9</h1>
<div class="wbtns"><button aria-label="最小化"><svg viewBox="0 0 10 10"><path d="M2 8h6" stroke="#555" stroke-width="2"/></svg></button><button aria-label="還原"><svg viewBox="0 0 10 10"><path d="M3 3V1h6v5H7M1 4h6v5H1z" fill="none" stroke="#555"/></svg></button><button aria-label="關閉"><svg viewBox="0 0 10 10"><path d="M1 1l8 8M9 1L1 9" stroke="#555" stroke-width="1.300"/></svg></button></div></header>
<nav class="menu"><button>檔案(F)</button><button>編輯(E)</button><button>檢視(V)</button><button>分析(A)</button><button>繪圖(C)</button><button>實體(S)</button><button>建模(P)</button><button>轉換(X)</button><button>機器類型(M)</button><button>刀具路徑(T)</button><button>螢幕(R)</button><button>設定(I)</button><button>說明(H)</button></nav>

<div class="bar" role="toolbar" aria-label="標準">
<i class="grip first"></i><button class="b" aria-label="新建"><svg><use href="#new"/></svg></button><button class="b" aria-label="開啟"><svg><use href="#open"/></svg></button><button class="b" aria-label="儲存"><svg><use href="#save"/></svg></button><button class="b" aria-label="列印"><svg><use href="#print"/></svg></button><button class="b" aria-label="預覽"><svg><use href="#prev"/></svg></button><button class="b" aria-label="總計"><svg><use href="#sigma"/></svg></button>
<i class="grip"></i><button class="b" aria-label="復原"><svg><use href="#undo"/></svg></button><button class="b flip" aria-label="重做"><svg><use href="#undo"/></svg></button>
<i class="grip"></i><button class="b" aria-label="適度化"><svg><use href="#fit"/></svg></button><button class="b" aria-label="重繪"><svg><use href="#clean"/></svg></button><i class="sep"></i><button class="b" aria-label="視窗放大"><svg><use href="#zwin"/></svg></button><button class="b" aria-label="目標放大"><svg><use href="#ztgt"/></svg></button><button class="b" aria-label="選取放大"><svg><use href="#zcur"/></svg></button><i class="sep"></i><button class="b" aria-label="上一比例"><svg><use href="#zback"/></svg></button><button class="b" aria-label="縮小"><svg><use href="#zout"/></svg></button><i class="sep"></i><button class="b" aria-label="旋轉視角"><svg><use href="#rot"/></svg></button><button class="b" aria-label="上一視角"><svg><use href="#eyeb"/></svg></button><button class="b" aria-label="命名視角"><svg><use href="#eyet"/></svg></button>
<i class="grip"></i><button class="b" aria-label="視角"><svg><use href="#gview"/></svg></button><button class="d" aria-label="更多視角"><svg><use href="#dd"/></svg></button>
<i class="grip"></i><button class="b" aria-label="線框"><svg><use href="#globe"/></svg></button><button class="d" aria-label="更多線框"><svg><use href="#dd"/></svg></button><button class="b" aria-label="著色"><svg><use href="#ball"/></svg></button><button class="d" aria-label="更多著色"><svg><use href="#dd"/></svg></button><button class="b" aria-label="半透明"><svg><use href="#ballx"/></svg></button><button class="b" aria-label="背面"><svg><use href="#gball"/></svg></button><button class="b" aria-label="材質"><svg><use href="#redx"/></svg></button><button class="b" aria-label="陰影"><svg><use href="#redy"/></svg></button>
<i class="grip"></i><button class="b" aria-label="刪除"><svg><use href="#pen"/></svg></button><button class="b" aria-label="刪除重複"><svg><use href="#pen2"/></svg></button><button class="d" aria-label="更多刪除"><svg><use href="#dd"/></svg></button><i class="sep"></i><button class="b" aria-label="恢復刪除"><svg><use href="#penb"/></svg></button><button class="d" aria-label="更多恢復"><svg><use href="#dd"/></svg></button>
<i class="grip"></i><button class="b" aria-label="分析圖素"><svg><use href="#lineq"/></svg></button><button class="b" aria-label="分析距離"><svg><use href="#dimq"/></svg></button><button class="b" aria-label="分析屬性"><svg><use href="#attr"/></svg></button><i class="sep"></i><button class="b" aria-label="設定"><svg><use href="#gear"/></svg></button><button class="b" aria-label="報告"><svg><use href="#listr"/></svg></button><button class="b" aria-label="統計"><svg><use href="#sigma"/></svg></button><button class="b" aria-label="視窗"><svg><use href="#four"/></svg></button><button class="d" aria-label="更多視窗"><svg><use href="#dd"/></svg></button>
</div>

<div class="bar" role="toolbar" aria-label="繪圖">
<i class="grip first"></i><button class="b" aria-label="點"><svg><use href="#plus"/></svg></button><button class="d" aria-label="更多點"><svg><use href="#dd"/></svg></button><button class="b" aria-label="線"><svg><use href="#line"/></svg></button><button class="d" aria-label="更多線"><svg><use href="#dd"/></svg></button><button class="b" aria-label="圓"><svg><use href="#circ"/></svg></button><button class="d" aria-label="更多圓"><svg><use href="#dd"/></svg></button><button class="b" aria-label="矩形"><svg><use href="#rect"/></svg></button><button class="d" aria-label="更多矩形"><svg><use href="#dd"/></svg></button><button class="b" aria-label="圓角"><svg><use href="#arc"/></svg></button><button class="d" aria-label="更多圓角"><svg><use href="#dd"/></svg></button><button class="b" aria-label="曲線"><svg><use href="#spl"/></svg></button><button class="d" aria-label="更多曲線"><svg><use href="#dd"/></svg></button><button class="b" aria-label="圓柱"><svg><use href="#cyl"/></svg></button><button class="d" aria-label="更多實體"><svg><use href="#dd"/></svg></button><button class="b" aria-label="曲面"><svg><use href="#surf"/></svg></button><button class="d" aria-label="更多曲面"><svg><use href="#dd"/></svg></button>
<i class="grip"></i><button class="b" aria-label="修剪"><svg><use href="#trim"/></svg></button><button class="b" aria-label="打斷"><svg><use href="#brk"/></svg></button><button class="d" aria-label="更多打斷"><svg><use href="#dd"/></svg></button>
<i class="grip"></i><button class="b" aria-label="動態轉換"><svg><use href="#mv1"/></svg></button><button class="b" aria-label="平移"><svg><use href="#mv2"/></svg></button><button class="b" aria-label="旋轉"><svg><use href="#rott"/></svg></button><button class="b" aria-label="鏡射"><svg><use href="#mir"/></svg></button><button class="b" aria-label="比例"><svg><use href="#scl"/></svg></button><button class="b" aria-label="移到原點"><svg><use href="#mvo"/></svg></button><button class="b" aria-label="補正"><svg><use href="#off"/></svg></button><button class="b" aria-label="投影"><svg><use href="#proj"/></svg></button><i class="sep"></i><button class="b" aria-label="串連補正"><svg><use href="#corn"/></svg></button><button class="d" aria-label="更多補正"><svg><use href="#dd"/></svg></button><button class="b" aria-label="陣列"><svg><use href="#grid9"/></svg></button><button class="b" aria-label="拖曳"><svg><use href="#stre"/></svg></button><button class="d" aria-label="更多轉換"><svg><use href="#dd"/></svg></button>
<i class="grip"></i><button class="b" aria-label="平面曲面"><svg><use href="#s1"/></svg></button><button class="b" aria-label="直紋"><svg><use href="#s2"/></svg></button><button class="b" aria-label="旋轉曲面"><svg><use href="#s3"/></svg></button><button class="b" aria-label="掃描"><svg><use href="#s4"/></svg></button><button class="b" aria-label="擠出"><svg><use href="#s5"/></svg></button><button class="d" aria-label="更多曲面二"><svg><use href="#dd"/></svg></button><i class="sep"></i><button class="b" aria-label="修整曲面"><svg><use href="#s6"/></svg></button><button class="b" aria-label="曲面倒圓角"><svg><use href="#s7"/></svg></button><button class="b" aria-label="網格"><svg><use href="#wc"/></svg></button><i class="sep"></i><button class="b" aria-label="曲面投影"><svg><use href="#s8"/></svg></button><button class="d" aria-label="更多投影"><svg><use href="#dd"/></svg></button>
<span class="tail"><button aria-label="更多"><svg><use href="#chev"/></svg></button><i class="grip"></i><button aria-label="更多二"><svg><use href="#chev"/></svg></button></span>
</div>

<div class="bar bar3" role="toolbar" aria-label="座標">
<i class="grip first"></i><label class="ax" for="cx">X</label><span class="combo"><input id="cx" value="10.81484"><svg><use href="#dd"/></svg></span><label class="ax" for="cy">Y</label><span class="combo"><input id="cy" value="355.07126"><svg><use href="#dd"/></svg></span><label class="ax" for="cz">Z</label><span class="combo"><input id="cz" value="0.0"><svg><use href="#dd"/></svg></span>
<button class="b off" aria-label="快速點"><svg><use href="#ab"/></svg></button><button class="b off" aria-label="游標設定"><svg><use href="#ag"/></svg></button><button class="b off" aria-label="交點"><svg><use href="#xx"/></svg></button><button class="d off" aria-label="更多點位"><svg><use href="#dd"/></svg></button><button class="b" aria-label="說明"><svg><use href="#help"/></svg></button>
<i class="grip"></i><button class="b off" aria-label="多邊形"><svg><use href="#oct"/></svg></button><i class="sep"></i><button class="b off" aria-label="層疊"><svg><use href="#lay"/></svg></button><i class="sep"></i><button class="b off" aria-label="切換"><svg><use href="#cyc"/></svg></button><i class="sep"></i><button class="b off" aria-label="範圍內"><svg><use href="#tsq"/></svg></button><button class="d off" aria-label="更多範圍"><svg><use href="#dd"/></svg></button><i class="sep"></i><button class="b off" aria-label="視窗選取"><svg><use href="#dsq"/></svg></button><button class="d off" aria-label="更多選取"><svg><use href="#dd"/></svg></button><button class="b off" aria-label="選取"><svg><use href="#curs"/></svg></button><button class="b off" aria-label="驗證"><svg><use href="#cubec"/></svg></button><i class="sep"></i><button class="b off" aria-label="選邊"><svg><use href="#cube1"/></svg></button><button class="b off" aria-label="選面"><svg><use href="#cube2"/></svg></button><button class="b off" aria-label="選實體"><svg><use href="#cube3"/></svg></button><i class="sep"></i><button class="b" aria-label="背面選取"><svg><use href="#cube4"/></svg></button><button class="b off" aria-label="上次選取"><svg><use href="#bcur"/></svg></button><i class="sep"></i><button class="b off on" aria-label="延遲"><svg><use href="#tgt"/></svg></button><button class="b off" aria-label="選項"><svg><use href="#clip"/></svg></button><i class="sep"></i><button class="b off" aria-label="取消"><svg><use href="#no"/></svg></button><button class="b off" aria-label="確定"><svg><use href="#yes"/></svg></button>
<span class="tail"><button aria-label="更多三"><svg><use href="#chev"/></svg></button><i class="grip"></i><button aria-label="更多四"><svg><use href="#chev"/></svg></button></span>
</div>

<main>
<div class="side" role="toolbar" aria-label="實體">
<i class="hgrip"></i><button class="v" aria-label="擠出實體"><svg><use href="#l1"/></svg></button><button class="v" aria-label="旋轉實體"><svg><use href="#l2"/></svg></button><button class="v" aria-label="掃描實體"><svg><use href="#l3"/></svg></button><button class="v" aria-label="舉升"><svg><use href="#l4"/></svg></button><i class="hsep"></i><button class="v" aria-label="圓角"><svg><use href="#l5"/></svg></button><button class="w" aria-label="更多圓角"><svg><use href="#dr"/></svg></button><button class="v" aria-label="倒角"><svg><use href="#l6"/></svg></button><button class="w" aria-label="更多倒角"><svg><use href="#dr"/></svg></button><i class="hsep"></i><button class="v" aria-label="薄殼"><svg><use href="#l7"/></svg></button><button class="v" aria-label="布林"><svg><use href="#l8"/></svg></button><button class="v" aria-label="修剪實體"><svg><use href="#l9"/></svg></button><button class="w" aria-label="更多修剪"><svg><use href="#dr"/></svg></button><i class="hsep"></i><button class="v" aria-label="推拉"><svg><use href="#l10"/></svg></button><button class="v" aria-label="移動面"><svg><use href="#l11"/></svg></button><button class="w" aria-label="更多面"><svg><use href="#dr"/></svg></button><button class="v" aria-label="節點"><svg><use href="#l12"/></svg></button><button class="w" aria-label="更多節點"><svg><use href="#dr"/></svg></button><button class="v" aria-label="特徵"><svg><use href="#l13"/></svg></button><button class="v" aria-label="查找特徵"><svg><use href="#l14"/></svg></button>
<span class="end"><button aria-label="展開"><svg><use href="#chevd"/></svg></button><i class="hgrip"></i><button aria-label="展開二"><svg><use href="#chevd"/></svg></button></span>
</div>
<div class="center">
<div class="func">功能狀態列</div>
<div class="work">
<section class="panel">
<div class="phead"><h2>刀具路徑</h2><button aria-label="選單"><svg viewBox="0 0 10 10"><path d="M0 3h10L5 8z" fill="#555"/></svg></button><button aria-label="固定"><svg viewBox="0 0 10 10"><path d="M3 0h5v6H3zM1 6h8M5 6v4" fill="none" stroke="#555"/></svg></button><button aria-label="關閉面板"><svg viewBox="0 0 10 10"><path d="M1 1l8 8M9 1L1 9" stroke="#555" stroke-width="1.500"/></svg></button></div>
<div class="ptools"><button aria-label="全選"><svg><use href="#p1"/></svg></button><button aria-label="取消全選"><svg><use href="#p2"/></svg></button><i></i><button aria-label="重新計算"><svg><use href="#p3"/></svg></button><button aria-label="重新計算失效"><svg><use href="#p4"/></svg></button><i></i><button aria-label="模擬路徑"><svg><use href="#wav"/></svg></button><button aria-label="實體驗證"><svg><use href="#p6"/></svg></button><button aria-label="模擬選項"><svg><use href="#p7"/></svg></button><button class="g1">G1</button><button aria-label="高速進給"><svg><use href="#p9"/></svg></button><i></i><button aria-label="刪除操作"><svg><use href="#p10"/></svg></button><i></i><button aria-label="面板說明"><svg><use href="#help"/></svg></button></div>
<div class="ptools two"><button aria-label="鎖定"><svg><use href="#q1"/></svg></button><button aria-label="顯示路徑"><svg><use href="#wavl"/></svg></button><button aria-label="關閉後處理"><svg><use href="#q3"/></svg></button><i></i><button aria-label="下移"><svg><use href="#q4"/></svg></button><button aria-label="上移"><svg><use href="#q5"/></svg></button><button aria-label="插入位置"><svg><use href="#q6"/></svg></button><button aria-label="捲動"><svg><use href="#q7"/></svg></button><i></i><button aria-label="只顯示選取"><svg><use href="#q8"/></svg></button><button aria-label="關聯圖形"><svg><use href="#q9"/></svg></button><button aria-label="編輯參數"><svg><use href="#q10"/></svg></button><i></i><button aria-label="機器模擬"><svg><use href="#q11"/></svg></button><button aria-label="刀具編輯"><svg><use href="#q12"/></svg></button></div>
<div class="treebox">
<ul class="tree"><li><div><b class="ex">−</b><svg><use href="#t1"/></svg>機器群組-1</div>
<ul><li><div><b class="ex">−</b><svg><use href="#t2"/></svg><span class="sm">屬性 - GGYY-4AXIS VMC</span></div>
<ul><li><div><b></b><svg><use href="#t3"/></svg>檔案</div></li><li><div><b></b><svg><use href="#t4"/></svg>刀具設定</div></li><li><div><b></b><svg><use href="#t5"/></svg>毛坯設定</div></li></ul></li>
<li><div><b class="ex">−</b><svg><use href="#t6"/></svg>刀具群組-1</div>
<ul><li><div><b class="ex">−</b><svg><use href="#t7"/></svg><span class="sel">1 - 曲線 - [WCS]</span></div>
<ul><li><div><b></b><svg><use href="#t8"/></svg>參數</div></li><li><div><b></b><svg><use href="#t4"/></svg><span class="sm">#1 - M9.0</span></div></li><li><div><b></b><svg><use href="#t9"/></svg>圖形 -</div></li><li><div><b></b><svg><use href="#t10"/></svg>刀具路徑</div></li></ul></li>
<li><div><b></b><svg><use href="#t11"/></svg></div></li></ul></li></ul></li></ul>
<div class="hs"><button aria-label="向左">◂</button><div class="thumb">III</div><div class="rest"></div><button aria-label="向右">▸</button></div>
</div>
<div class="ptabs"><button class="act">刀具路徑</button><button>實體</button></div>
</section>
<section class="view">
<div class="player">
<button aria-label="播放"><svg><use href="#play"/></svg></button><button aria-label="停止"><svg><use href="#stop"/></svg></button><button aria-label="到開頭"><svg><use href="#rw0"/></svg></button><button aria-label="後退"><svg><use href="#rw"/></svg></button><button class="flip" aria-label="前進"><svg><use href="#rw"/></svg></button><button class="flip" aria-label="到結尾"><svg><use href="#rw0"/></svg></button>
<button class="gap" aria-label="描繪路徑"><svg><use href="#tr"/></svg></button><button class="lit" aria-label="執行"><svg><use href="#tr2"/></svg></button>
<span class="speed"><input type="range" min="0" max="100" value="58" aria-label="速度"></span><span class="pos"><input type="range" min="0" max="100" value="0" aria-label="位置"></span>
<button aria-label="停止條件"><svg><use href="#halt"/></svg></button><button aria-label="說明"><svg><use href="#quest"/></svg></button></div>
<div class="scene">
<svg viewBox="377 226 1022 582" preserveAspectRatio="none">
<g stroke="#707070" stroke-width="1.200"><path d="M435 226L807 808M604 226L642 808M377 545L1399 445"/></g>
<path d="M607 368L641 365Q649 370 648 399 649 431 642 434L613 437Q604 433 603 402 602 372 607 368z" fill="url(#gr)"/>
<path d="M639 366Q647 372 646 400 647 430 641 434" fill="none" stroke="#900000" stroke-width="2"/>
<path d="M642 393L774 381Q781 381 781 386 781 391 775 392L642 405z" fill="url(#gg)"/>
<path d="M790 437L803 435C818 515 845 600 884 626 908 604 917 540 922 470 927 410 926 380 930 356L941 354Q944 366 939 376C938 500 924 600 889 629Q880 632 873 629C832 596 803 505 790 437z" fill="#98009a"/>
<path d="M797 437C812 515 836 598 876 628" fill="none" stroke="#d010d0" stroke-width="4"/>
<path d="M886 628C918 600 931 500 935 410L936 358" fill="none" stroke="#f414f4" stroke-width="5"/>
<path d="M936 358L942 355Q952 400 958 441 945 414 936 366z" fill="#cc08cc"/><path d="M941 366L955 432" stroke="#8a008a" stroke-width="1.500"/>
<path d="M433 752V722" stroke-width="2" stroke="#1818d0"/><path d="M429 726l2-8 4 8z" fill="#1818d0"/>
<path d="M433 752L462 749" stroke="#e02020" stroke-width="2"/><path d="M457 746l9 3-9 4z" fill="#e02020"/>
<path d="M432 753l8 3-4 6z" fill="#20d020"/>
<g class="axis"><text x="427" y="716" fill="#2020e8">Z</text><text x="470" y="752" fill="#f02020">X</text><text x="435" y="766" fill="#20e020">Y</text></g>
<path d="M1279.500 773v24M1375.500 773v24M1279 785.500h97" stroke="#fff" fill="none"/>
<g class="scale"><text x="1328" y="782">68.531 mm</text><text x="1328" y="797" class="cj">公制</text></g>
</svg>
</div>
<div class="vtabs"><button>主檢視面板</button></div>
</section>
<div class="dialog" role="dialog" aria-label="路徑模擬">
<div class="dt"><svg class="s16"><use href="#logo"/></svg><span>路徑模擬</span><button aria-label="關閉對話框"><svg viewBox="0 0 10 10"><path d="M1 1l8 8M9 1L1 9" stroke="#fff" stroke-width="2.500"/></svg></button></div>
<div class="db">
<button class="exp" aria-label="展開"><svg><use href="#d0"/></svg></button>
<div class="r1"><button class="lit" aria-label="自動換色"><svg><use href="#d1"/></svg></button><button class="lit" aria-label="顯示刀具"><svg><use href="#d2"/></svg></button><button class="lit" aria-label="顯示夾頭"><svg><use href="#d3"/></svg></button><button class="lit" aria-label="快速位移"><svg><use href="#d4"/></svg></button><button aria-label="端點"><svg><use href="#d5"/></svg></button><button aria-label="著色驗證"><svg><use href="#d6"/></svg></button><button class="warn" aria-label="選項"><svg><use href="#d7"/></svg></button></div>
<div class="r2"><button aria-label="限制描繪"><svg><use href="#d8"/></svg></button><button aria-label="關閉限制"><svg><use href="#d9"/></svg></button><button aria-label="擷取"><svg><use href="#d10"/></svg></button><button aria-label="儲存"><svg><use href="#d11"/></svg></button></div>
<div class="r3"><button aria-label="確定"><svg><use href="#okk"/></svg></button><button aria-label="說明"><svg><use href="#quest"/></svg></button></div>
</div></div>
</div>
</div>
<div class="side right" role="toolbar" aria-label="檢視">
<i class="hgrip"></i><button class="v" aria-label="儲存"><svg><use href="#save"/></svg></button><button class="v" aria-label="另存"><svg><use href="#r2"/></svg></button><button class="v" aria-label="圖層"><svg><use href="#r3"/></svg></button><button class="v" aria-label="前視"><svg><use href="#r4"/></svg></button><button class="v" aria-label="俯視"><svg><use href="#r5"/></svg></button><button class="v" aria-label="新檔"><svg><use href="#new"/></svg></button>
<i class="hgrip mid"></i><button class="v off" aria-label="標註"><svg><use href="#rb1"/><use href="#bolt" x="15" y="9" width="10" height="15"/></svg></button><button class="v off" aria-label="曲面"><svg><use href="#rb2"/><use href="#bolt" x="15" y="9" width="10" height="15"/></svg></button><button class="v off" aria-label="點"><svg><path d="M6 1v11M1 6.500h11" stroke="#4f81b5" stroke-width="3"/><use href="#bolt" x="15" y="9" width="10" height="15"/></svg></button><button class="v off" aria-label="線"><svg><path d="M3 21L20 4" stroke="#5a9380" stroke-width="1.500"/><path d="M21 0v6M18 3h6M3 18v6M0 21h6" stroke="#4f81b5" stroke-width="2"/><use href="#bolt" x="15" y="9" width="10" height="15"/></svg></button><button class="v off" aria-label="圓"><svg><circle cx="12" cy="12" r="10" fill="none" stroke="#5a9380" stroke-width="1.700"/><use href="#bolt" x="15" y="9" width="10" height="15"/></svg></button><button class="v off" aria-label="曲線"><svg><path d="M1 23Q0 10 12 9T22 1" fill="none" stroke="#5a9380" stroke-width="1.700"/><use href="#bolt" x="15" y="9" width="10" height="15"/></svg></button><button class="v off" aria-label="曲面二"><svg><path d="M1 13Q9 11 15 1l8 4q-1 10-15 18z" fill="#70b8a0"/><path d="M4 18Q15 12 20 3M7 7l10 8" fill="none" stroke="#444"/><use href="#bolt" x="15" y="9" width="10" height="15"/></svg></button><button class="v off" aria-label="實體"><svg><use href="#cube"/><use href="#bolt" x="15" y="9" width="10" height="15"/></svg></button><button class="v off" aria-label="線架構"><svg><use href="#wire"/><use href="#bolt" x="15" y="9" width="10" height="15"/></svg></button><button class="v off" aria-label="清除"><svg><use href="#no"/></svg></button><i class="hsep"></i><button class="v off" aria-label="色彩"><svg><path d="M1 13h10v10H1z" fill="#eee" stroke="#bbb"/><path d="M12 1h11v11H12z" fill="#8853b0"/><use href="#bolt" x="15" y="9" width="10" height="15"/></svg></button><button class="v off" aria-label="層別"><svg><path d="M1 1h6v6H1zM1 9h6v6H1zM1 17h6v6H1z" fill="#4f81b5"/><path d="M8 1h3v22H8" fill="none" stroke="#444"/><use href="#bolt" x="15" y="9" width="10" height="15"/></svg></button>
<span class="end"><button aria-label="展開三"><svg><use href="#chevd"/></svg></button></span>
</div>
</main>

<footer class="status"><span class="wcs">WCS: 俯檢視&nbsp; 刀具/繪圖平面: 俯檢視</span>
<button>3D</button><button class="c4">螢幕檢視</button><button class="c3">WCS</button><button>平面</button>
<span class="zf"><label for="zz">Z</label><input id="zz" value="0.0"><i class="ar"></i></span>
<button class="sw s1" aria-label="色彩一"><svg viewBox="0 0 16 12"><path d="M2 1h7v7H2zM6 4h7v7H6z" fill="none" stroke="#444"/></svg></button><button class="sw s2" aria-label="色彩二"><svg viewBox="0 0 16 12"><path d="M8 0l6 3v6l-6 3-6-3V3z" fill="#777"/><path d="M8 6l6-3v6l-6 3z" fill="#333"/></svg></button><button class="sw s3" aria-label="色彩三"><svg viewBox="0 0 16 12"><path d="M3 3l10-2v9L3 11zM8 2v8M3 7l10-1" fill="#ddd" stroke="#444"/></svg></button>
<span class="lf"><label for="lv">層別</label><input id="lv" value="6"><i class="ar"></i></span>
<button class="pr">屬性</button>
<button class="ps" aria-label="點樣式"><svg viewBox="0 0 14 12"><path d="M1 6h10M6 1v10M2 10l8-8" stroke="#111"/></svg><i class="ar g"></i></button><button class="ls" aria-label="線型"><b></b><i class="ar g"></i></button><button class="ls lw" aria-label="線寬"><b></b><i class="ar g"></i></button><button class="gp">群組</button><button class="hq">?</button></footer>

<div class="task"><button class="start" aria-label="開始"><svg viewBox="0 0 38 38"><circle cx="19" cy="19" r="18" fill="url(#orb)" stroke="#a9cbe0"/><path d="M10 12q4-3 8-1l-2 7q-4-2-8 1z" fill="#f0622c"/><path d="M20 12q4 2 9-1l-3 8q-4 2-8 0z" fill="#8cc63c"/><path d="M8 21q4-3 8-1l-2 7q-4-2-8 0z" fill="#3a8ee0"/><path d="M17 21q4 2 8 0l-2 7q-4 2-8-1z" fill="#fcc62c"/></svg></button>
<div class="duo"><button class="tb"><svg viewBox="0 0 32 32"><path d="M2 20L16 13l14 4-14 8z" fill="#ddd"/><path d="M2 20l14 5v5L2 25z" fill="#777"/><path d="M30 17v5l-14 8v-5z" fill="#999"/><path d="M4 23l4 2" stroke="#4d4" stroke-width="2"/></svg>抽取式磁碟 (I:)</button><button class="tb"><svg viewBox="0 0 32 32"><path d="M3 2l14 3v25l-9 2-5-3z" fill="#e4c66a"/><path d="M9 5l13-3v24L9 31z" fill="#f6e49a"/><path d="M17 13h7v9h5l-8 9-8-9h4z" fill="#2c8cd8"/></svg>下載</button></div>
<button class="tb"><svg viewBox="0 0 32 32"><circle cx="16" cy="16" r="15" fill="#e8701c"/><path d="M10 3q14-6 20 9l-2 12q-8-8-14-8T8 9z" fill="#1c4f94"/><path d="M4 6q3 3 8 3-4 6 2 9t9 0q-3 8-12 5T4 6z" fill="#f8941c"/><path d="M29 9q2 9-3 14l-3-4q5-3 6-10z" fill="#ffd02c"/></svg>mastercam怎么...</button>
<button class="tb lt"><svg viewBox="0 0 24 24"><use href="#logo"/></svg>Mastercam 銑床 ...</button>
<button class="tb dk"><svg viewBox="0 0 32 32"><circle cx="16" cy="16" r="15" fill="#fccf30"/><path d="M3 8.500A15 15 0 0 1 29 8.500H16L10 19z" fill="#e0402f"/><path d="M3 8.500A15 15 0 0 0 14.500 31L22 20 10 20z" fill="#2fa04e"/><circle cx="16" cy="16" r="7" fill="#fff"/><circle cx="16" cy="16" r="5.500" fill="#4285f4"/></svg>螢幕截圖 - Googl...</button>
<svg class="streak" viewBox="0 0 90 39"><path d="M20 0h16Q62 18 72 39H56Q46 18 20 0z" fill="#9fc0dc" opacity=".6"/></svg>
<div class="tray"><svg viewBox="0 0 16 16"><path d="M1 6h14v8H1z" fill="#ddd"/><path d="M3 8h11M3 10h11M5 12h6" stroke="#456" stroke-dasharray="1 1"/><path d="M7 6q1-4 6-4" stroke="#ddd" fill="none"/></svg><svg viewBox="0 0 16 16"><circle cx="8" cy="8" r="7.500" fill="#1c2c9c" stroke="#c8d0f0"/><path d="M6 6q0-2 2-2t2 2q0 1-2 2v2M8 11v2" fill="none" stroke="#fff" stroke-width="1.500"/></svg><svg viewBox="0 0 16 16" class="rs"><path d="M3 6h6v4H3zM5 6V3h6v5H9" fill="none" stroke="#fff" stroke-width="1.200"/></svg><svg viewBox="0 0 16 16" class="fl"><path d="M2 1v15M3 2h5l2 2h5v6h-5L8 8H3z" fill="#fff" stroke="#fff"/></svg><svg viewBox="0 0 16 16"><path d="M4 3h11v8H4zM1 2v7" fill="#357" stroke="#fff" stroke-width="1.500"/></svg><svg viewBox="0 0 16 16"><path d="M1 6h3l4-4v12l-4-4H1z" fill="#fff"/><path d="M10 5q3 3 0 6M12 3q5 5 0 10" fill="none" stroke="#fff"/></svg>
<time>上午 12:09<br>2016/2/26</time><span class="mark">三维网www.3dportal.cn</span></div><button class="desk" aria-label="顯示桌面"></button></div>
</div>
</body>
</html>
```
FILE: styles.css
```css
*{box-sizing:border-box}
body{margin:0;background:#f0f0f0;font:11px/16px "Noto Sans","Noto Sans CJK TC",sans-serif;color:#222}
button{font:inherit;color:inherit;border:0;padding:0;margin:0;background:none;display:flex;align-items:center;justify-content:center;flex:none;white-space:nowrap}
input{font:inherit;color:inherit;margin:0;min-width:0}
svg{display:block;flex:none}
.defs{position:absolute}
ul{list-style:none;margin:0;padding:0}
.app{display:flex;flex-direction:column;height:100vh;overflow:hidden}
.s16{width:16px;height:16px}
.title{display:flex;align-items:center;height:20px;padding:0 9px 0 2px;gap:7px;flex:none}
.title h1{margin:0;font-size:11px;font-weight:400;color:#444;flex:1}
.wbtns{display:flex;gap:17px}
.wbtns svg{width:10px;height:10px}
.menu{display:flex;height:24px;padding-left:7px;gap:1px;align-items:center;flex:none}
.menu button{padding:0 8px}
.bar{display:flex;align-items:center;height:37px;flex:none}
.bar3{height:41px}
.b{width:33px;height:32px}
.b svg{width:24px;height:24px}
.d{width:22px;height:32px}
.d svg{width:10px;height:6px}
.flip svg{transform:scaleX(-1)}
.off svg{opacity:.5}
.on{background:#d8d8d8}
.grip{width:12px;height:22px;flex:none;background:repeating-linear-gradient(to bottom,#c4c4c4 0 2px,transparent 2px 4px) 7px 0/2px 100% no-repeat}
.grip.first{width:10px;background-position:4px 0}
.sep{width:8px;height:32px;flex:none;background:linear-gradient(#c4c4c4,#c4c4c4) 4px 0/1px 100% no-repeat}
.tail{display:flex;align-items:center;margin-left:auto;gap:6px;padding:0 6px 10px 0}
.tail svg{width:16px;height:10px}
.ax{width:36px;text-align:center;font:600 25px/32px "Open Sans",sans-serif;color:#777;flex:none}
.combo{display:flex;align-items:center;width:147px;height:21px;border:1px solid #a5acb5;padding-right:4px;flex:none}
.combo input{flex:1;border:0;background:none;padding:0 3px;color:#777}
.combo svg{width:6px;height:4px;opacity:.6}
.combo + .b{margin-left:4px}
main{display:flex;flex:1;min-height:0}
.side{width:37px;flex:none;display:flex;flex-direction:column;align-items:center}
.side.right{width:41px}
.side.right .hgrip:first-child{height:12px}
.v{width:33px;height:33px}
.v svg{width:24px;height:24px}
.w{width:33px;height:22px}
.w svg{width:6px;height:10px}
.hgrip{width:24px;height:10px;flex:none;background:repeating-linear-gradient(to right,#c4c4c4 0 2px,transparent 2px 4px) 0 5px/100% 2px no-repeat}
.side.right .mid{margin-top:26px;height:8px}
.hsep{width:33px;height:8px;flex:none;background:linear-gradient(#c4c4c4,#c4c4c4) 0 4px/100% 1px no-repeat}
.end{margin-top:auto;display:flex;flex-direction:column;align-items:flex-end;width:24px;padding-bottom:4px;gap:7px}
.right .end{width:20px}
.end svg{width:10px;height:16px}
.end .hgrip{align-self:flex-start}
.center{flex:1;min-width:0;display:flex;flex-direction:column;position:relative}
.func{height:36px;flex:none;border-bottom:3px solid #e3e3e3;padding:7px 0 0 188px;font-size:12px;color:#000}
.work{flex:1;min-height:0;display:flex;gap:6px}
.panel{width:334px;flex:none;display:flex;flex-direction:column}
.phead{display:flex;align-items:center;height:34px;padding:0 3px 0 5px;gap:7px;flex:none}
.phead h2{margin:0;flex:1;font:300 18px/24px "Noto Sans CJK TC",sans-serif;color:#333}
.phead svg{width:10px;height:10px}
.ptools{display:flex;align-items:center;height:24px;padding-left:2px;flex:none}
.ptools button{width:22px;height:22px;opacity:.55}
.ptools svg{width:16px;height:16px}
.ptools i{width:8px;height:20px;background:linear-gradient(#bbb,#bbb) 4px 0/1px 100% no-repeat}
.g1{color:#4f81b5;font-size:12px}
.treebox{flex:1;min-height:0;margin-top:6px;margin-left:2px;background:#fff;border:1px solid #b8bcc4;display:flex;flex-direction:column;overflow:hidden}
.tree{flex:1;min-height:0;padding:1px 0 0 8px;font-size:12px;color:#111;white-space:nowrap}
.tree ul{padding-left:19px}
.tree div{display:flex;align-items:center;height:16px}
.tree b{width:9px;flex:none;margin-right:4px}
.tree .ex{height:9px;border:1px solid #999;background:#fff;font:9px/6px "Noto Sans",sans-serif;text-align:center;color:#345}
.tree svg{width:16px;height:16px;margin:0 6px 0 0}
.tree ul li{background:repeating-linear-gradient(to bottom,#666 0 1px,transparent 1px 2px) 4px 0/1px 100% no-repeat,repeating-linear-gradient(to right,#666 0 1px,transparent 1px 2px) 4px 8px/9px 1px no-repeat}
.tree ul li:last-child{background-size:1px 8px,9px 1px}
.sm{font-size:11px}
.sel{background:#e0e0e0}
.hs{display:flex;height:17px;flex:none;background:#ececec;margin:0 2px 2px}
.hs button{width:17px;font:12px/14px "DejaVu Sans",sans-serif}
.thumb{flex:5;border:1px solid #8c8c8c;background:linear-gradient(#f4f4f4,#c8c8cc);text-align:center;font:bold 8px/14px "Noto Sans",sans-serif;color:#555}
.rest{flex:1}
.ptabs{display:flex;align-items:flex-end;height:45px;flex:none;padding-bottom:3px;background:linear-gradient(#fafafa 21px,#f0f0f0 21px)}
.ptabs button{height:21px;padding:0 8px}
.ptabs .act{background:#fff;border:1px solid #bbb;border-top:0;padding:0 5px;color:#555}
.view{flex:1;min-width:0;display:flex;flex-direction:column}
.player{display:flex;align-items:center;gap:2px;height:31px;padding:0 1px;border-top:1px solid #000;flex:none}
.player button,.db button{width:22px;height:22px;border:1px solid #777;border-radius:3px;background:linear-gradient(#f8f8f8 50%,#dcdcdc 50%)}
.player svg,.db svg{width:18px;height:18px}
.player .gap{margin-left:6px}
.player .lit,.db .lit{border-color:#2c628b;background:linear-gradient(#d8effb 50%,#8cc4e4 50%)}
input[type=range]{appearance:none;display:block;background:none;width:100%;height:16px}
.speed{width:84px;margin-left:7px;padding-top:10px;background:linear-gradient(#bbb,#bbb) 5px 2px/1px 4px no-repeat,linear-gradient(#bbb,#bbb) 78px 2px/1px 4px no-repeat}
.speed ::-webkit-slider-runnable-track{height:2px;background:#b8b8b8}
.speed ::-webkit-slider-thumb{appearance:none;width:9px;height:14px;margin-top:-8px;border:1px solid #777;border-radius:5px 5px 0 0;background:#f4f4f4}
.pos{flex:1;margin:0 13px 0 15px;padding-top:8px;background:linear-gradient(#000,#000) 4px 0/1px 5px no-repeat,linear-gradient(#000,#000) 100% 0/1px 5px no-repeat}
.pos ::-webkit-slider-runnable-track{height:9px;background:linear-gradient(#3d70b4 2px,#5090dc 2px)}
.pos ::-webkit-slider-thumb{appearance:none;width:10px;height:16px;margin-top:-4px;border:2px solid #99927c;background:#eee8d8}
.scene{flex:1;min-height:0;background:#000}
.scene svg{width:100%;height:100%}
.axis{font:bold 11px "DejaVu Sans",sans-serif}
.scale{font:bold 11px "DejaVu Sans",sans-serif;fill:#fff;text-anchor:middle}
.scale .cj{font-family:"Noto Sans CJK TC",sans-serif}
.vtabs{height:27px;flex:none;border-top:4px double #ccc}
.vtabs button{height:23px;background:#fff;padding:0 5px;border-right:1px solid #bbb;color:#555}
.dialog{position:absolute;left:140px;top:174px;width:246px;height:160px;border:1px solid #444;border-radius:7px;padding:0 5px 5px;display:flex;flex-direction:column;background:linear-gradient(to right,#fff 188px,#cfe0ee 195px,#222 202px,#333);box-shadow:0 1px 6px rgba(0,0,0,.6)}
.dt{display:flex;height:27px;align-items:center;gap:5px;font-size:12px;padding-left:2px;color:#111}
.dt button{margin-left:auto;align-self:flex-start;width:47px;height:18px;border:1px solid #aaa;border-top:0;border-radius:0 0 5px 5px;background:linear-gradient(to right,#99a4b0,#2c3036 30%,#444)}
.dt button svg{width:9px;height:9px}
.db{flex:1;background:#f0f0f0;border:1px solid #555;padding:2px 1px;display:flex;flex-direction:column}
.db .exp{width:19px;height:18px}
.r1{display:flex;gap:2px;margin-top:12px}
.db .r1 button,.db .r2 button{width:24px;height:24px}
.db .r1 .warn{margin-left:8px}
.r2{display:flex;gap:4px;justify-content:flex-end;margin:1px 5px 0 0}
.r2 button:last-child{margin-left:2px}
.r3{display:flex;gap:4px;justify-content:flex-end;margin:15px 5px 0 0}
.db .r3 button{width:52px;height:25px}
.db .r3 svg{width:22px;height:20px}
.status{display:flex;height:26px;flex:none;background:#606060;padding:2px 0 1px 4px;gap:3px}
.wcs{flex:1;color:#fff;line-height:22px;white-space:nowrap}
.status>button,.zf,.lf{background:#fff;color:#111;font:12px/18px "Liberation Serif","Noto Sans CJK TC",serif}
.status>button{width:23px;height:23px}
.status>.c4{width:60px}
.status>.c3{width:43px}
.status>button:nth-of-type(4){width:26px}
.zf,.lf{display:flex;align-items:center;height:23px}
.zf{width:97px}
.zf label{width:14px;text-align:center;font:12px/20px "Noto Sans",sans-serif}
.zf input{width:63px;border:0;background:#ffff80;height:18px;padding:0 3px;font:11px/16px "Noto Sans",sans-serif}
.ar{margin:0 auto;border:4px solid transparent;border-top:5px solid #000;border-bottom:0}
.ar.g{border-top-color:#777;border-width:4px 3px 0}
.status>.sw{width:30px;flex-direction:column;justify-content:space-between;padding:2px 1px 1px}
.sw svg{width:16px;height:12px}
.sw::after{content:"";width:100%;height:6px;background:#ccc}
.s2::after{background:#808080}
.s3::after{background:#ff8040}
.lf{width:128px}
.lf label{background:#f88080;width:27px;text-align:center;height:19px;margin-left:1px}
.lf input{width:85px;border:0;background:#fff;padding:0 4px;font:11px/16px "Noto Sans",sans-serif}
.status>.pr{width:31px}
.status>.ps{width:41px}
.ps svg{width:14px;height:12px;margin-left:3px}
.status>.ls{width:61px;padding-left:2px}
.ls b{width:38px;height:3px;background:#000}
.status>.lw{width:66px}
.lw b{width:43px;height:1px}
.status>.gp{width:38px}
.status>.hq{width:18px}
.task{display:flex;height:39px;flex:none;background:linear-gradient(#6f97ba 0 1px,transparent 1px),linear-gradient(to right,#1c6ea4,#2574a8 30%,#155490 62%,#17508c 80%,#153f70);color:#fff;font-size:12px;align-items:center;gap:4px}
.start{width:56px;height:39px}
.start svg{width:38px;height:38px}
.duo{display:flex}
.tb{width:159px;height:37px;justify-content:flex-start;gap:5px;padding-left:8px;border:1px solid #8fb8cf;border-radius:3px;background:linear-gradient(170deg,#89b5cd,#5b98ba 45%,#3a83ac 50%,#3b86b2);box-shadow:0 0 0 1px #123f60}
.duo .tb{box-shadow:none}
.task>.tb{width:158px}
.tb svg{width:31px;height:31px}
.task>.lt{background:linear-gradient(170deg,#c0d7e6,#8fb6d2 45%,#6f9fc5 50%,#7eabcc)}
.task>.dk{background:linear-gradient(170deg,#7ea6c4,#427fae 45%,#2b6c9f 50%,#2c6fa4)}
.streak{width:90px;height:39px;margin-left:140px}
.tray{display:flex;margin-left:auto;align-items:center;gap:8px;position:relative;align-self:stretch}
.tray svg{width:16px;height:16px}
.tray .rs{align-self:flex-start;margin-top:4px}
.tray .fl{margin-left:18px}
.tray time{text-align:right;line-height:20px;margin-left:12px}
.mark{position:absolute;right:-7px;top:17px;font:bold 16px/18px "DejaVu Sans","Noto Sans CJK SC",sans-serif;color:#fff;-webkit-text-stroke:2px #d82020;paint-order:stroke fill;white-space:nowrap}
.desk{width:14px;height:38px;margin-left:8px;border:1px solid #6f97ba;background:#2a5a90}
```
